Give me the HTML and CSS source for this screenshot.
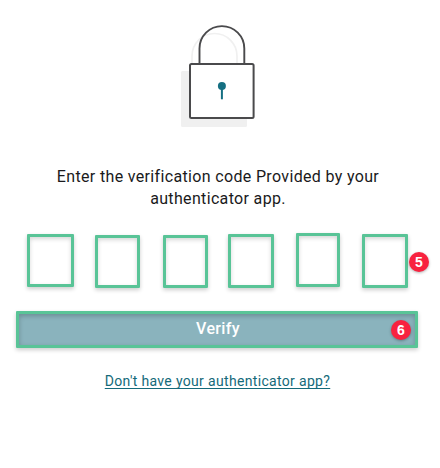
FILE: index.html
```html
<!DOCTYPE html>
<html lang="en">
<head>
<meta charset="utf-8">
<title>Verification code</title>
<link rel="stylesheet" href="styles.css">
</head>
<body>
<main class="panel">
  <svg class="lock" width="80" height="108" viewBox="0 0 80 108" aria-hidden="true">
    <rect x="3" y="51" width="66" height="56" rx="1.5" fill="#f0f0f0"/>
    <path d="M14 45V36a22.5 22.5 0 0 1 45 0v9" fill="none" stroke="#f0f0f0" stroke-width="1.7"/>
    <path d="M21.5 44V28.5a22.4 22.4 0 0 1 44.8 0V44" fill="none" stroke="#4a4a4c" stroke-width="1.9"/>
    <rect x="12" y="44.1" width="63.6" height="54" rx="1.5" fill="#fff" stroke="#4a4a4c" stroke-width="2"/>
    <path d="M43.9 66v13.3" stroke="#156f82" stroke-width="2"/>
    <circle cx="43.9" cy="66" r="4" fill="#156f82"/>
  </svg>
  <p class="message"><span class="line">Enter the verification code Provided by your</span><span class="line">authenticator app.</span></p>
  <div class="code">
    <div class="digit d1"></div>
    <div class="digit d2"></div>
    <div class="digit d3"></div>
    <div class="digit d4"></div>
    <div class="digit d5"></div>
    <div class="digit d6"><span class="badge five">5</span></div>
  </div>
  <div class="verify"><span class="label">Verify</span><span class="badge six">6</span></div>
  <a class="help">Don't have your authenticator app?</a>
</main>
</body>
</html>
```
FILE: styles.css
```css
* { box-sizing: border-box; }
body { margin: 0; background: #fff; font-family: Roboto, "Liberation Sans", sans-serif; }
.panel {
  width: 440px;
  height: 468px;
  padding: 20px 22px 0 16px;
  display: flex;
  flex-direction: column;
  align-items: center;
  overflow: hidden;
}
.lock { display: block; flex: none; margin-left: 2px; }
.message {
  margin: 38px 0 0;
  padding-left: 2px;
  font-size: 16px;
  line-height: 22px;
  letter-spacing: .34px;
  text-align: center;
  color: #1a1a1c;
}
.line { display: block; white-space: nowrap; }
.code {
  width: 402px;
  height: 55px;
  margin-top: 23px;
  padding-left: 11px;
  display: flex;
  align-items: flex-start;
}
.digit {
  position: relative;
  flex: none;
  width: 45px;
  height: 53px;
  border: 3px solid #59c497;
  border-radius: 1px;
  box-shadow: 0 2px 4px rgba(0, 0, 0, .2), inset 0 2px 4px rgba(0, 0, 0, .16);
}
.d1 { width: 47px; margin: 1px 21px 0 0; }
.d2 { margin: 2px 23px 0 0; }
.d3 { margin: 2px 20px 0 0; }
.d4 { width: 46px; height: 54px; margin: 1px 22px 0 0; }
.d5 { width: 44px; height: 54px; margin-right: 22px; }
.d6 { width: 46px; height: 54px; margin-top: 1px; }
.badge {
  position: absolute;
  width: 20px;
  height: 20px;
  border-radius: 50%;
  background: #f8223f;
  color: #fff;
  font: bold 14px/20px "Liberation Sans", sans-serif;
  text-align: center;
  box-shadow: 0 1px 3px rgba(0, 0, 0, .3);
}
.five { left: 44px; top: 15px; }
.verify {
  position: relative;
  width: 402px;
  height: 37px;
  margin-top: 23px;
  border: 3px solid #59c497;
  border-radius: 1px;
  background: #8ab3bd;
  box-shadow: 0 2px 4px rgba(0, 0, 0, .2), inset 0 2px 5px rgba(0, 0, 0, .22);
  color: #fff;
  text-align: center;
}
.label { padding-left: 2px; font-size: 16px; font-weight: 500; line-height: 30px; letter-spacing: .35px; }
.six { right: 4px; top: 6px; }
.help {
  margin-top: 24px;
  padding-left: 1px;
  font-size: 14px;
  line-height: 18px;
  letter-spacing: .33px;
  color: #146a7a;
  white-space: nowrap;
  text-decoration: underline;
  text-decoration-skip-ink: none;
  text-underline-offset: 2px;
  text-decoration-thickness: 1px;
}
```
